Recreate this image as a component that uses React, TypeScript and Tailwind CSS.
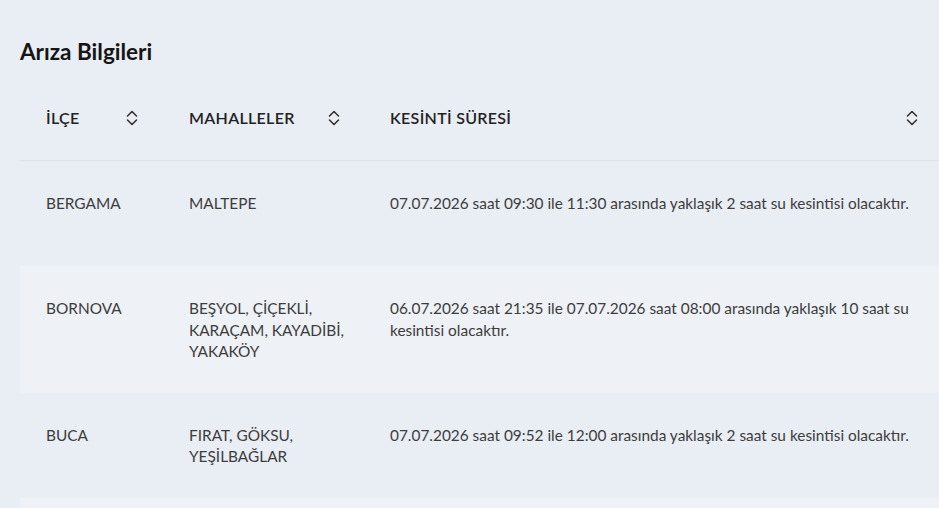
import React from "react";

const SortIcon = () => (
  <svg width="12" height="20" viewBox="0 0 12 20" fill="none" stroke="#333" strokeWidth="1.6" strokeLinecap="round" strokeLinejoin="round">
    <path d="M1.5 8 L6 3.5 L10.5 8" />
    <path d="M1.5 12 L6 16.5 L10.5 12" />
  </svg>
);

const rows = [
  {
    ilce: "BERGAMA",
    mah: ["MALTEPE"],
    sure: "07.07.2026 saat 09:30 ile 11:30 arasında yaklaşık 2 saat su kesintisi olacaktır.",
    light: false,
  },
  {
    ilce: "BORNOVA",
    mah: ["BEŞYOL, ÇİÇEKLİ,", "KARAÇAM, KAYADİBİ,", "YAKAKÖY"],
    sure: "06.07.2026 saat 21:35 ile 07.07.2026 saat 08:00 arasında yaklaşık 10 saat su kesintisi olacaktır.",
    light: true,
  },
  {
    ilce: "BUCA",
    mah: ["FIRAT, GÖKSU,", "YEŞİLBAĞLAR"],
    sure: "07.07.2026 saat 09:52 ile 12:00 arasında yaklaşık 2 saat su kesintisi olacaktır.",
    light: false,
  },
];

export default function App() {
  return (
    <div
      className="w-[939px] h-[508px] overflow-hidden bg-[#e9edf4] text-[#3d3d3d]"
      style={{ fontFamily: "Lato, 'Noto Sans', sans-serif" }}
    >
      <div className="pl-5 pt-[38px]">
        <h2 className="text-[22.5px] font-bold text-[#151515] leading-[28px]">Arıza Bilgileri</h2>
        <div className="w-[924px] mt-[13px]">
          <div className="flex items-center h-[82px] pb-1 border-b border-[#dce1e9] text-[16px] font-semibold text-[#222] tracking-[0.3px]">
            <div className="w-[143px] pl-[26px] pr-[25px] flex items-center justify-between">
              <span>İLÇE</span>
              <SortIcon />
            </div>
            <div className="w-[201px] pl-[26px] pr-[24px] flex items-center justify-between">
              <span>MAHALLELER</span>
              <SortIcon />
            </div>
            <div className="flex-1 pl-[26px] pr-[26px] flex items-center justify-between">
              <span>KESİNTİ SÜRESİ</span>
              <SortIcon />
            </div>
          </div>
          {rows.map((r, i) => (
            <div
              key={i}
              className={`flex min-h-[105px] pt-8 pb-[30px] text-[15.4px] leading-[21.5px] ${r.light ? "bg-[#eef1f6]" : ""}`}
            >
              <div className="w-[143px] pl-[26px]">{r.ilce}</div>
              <div className="w-[201px] pl-[26px] pr-4">
                {r.mah.map((m, j) => (
                  <div key={j}>{m}</div>
                ))}
              </div>
              <div className="flex-1 pl-[26px] pr-6">{r.sure}</div>
            </div>
          ))}
          <div className="h-[105px] bg-[#eef1f6]" />
        </div>
      </div>
    </div>
  );
}
